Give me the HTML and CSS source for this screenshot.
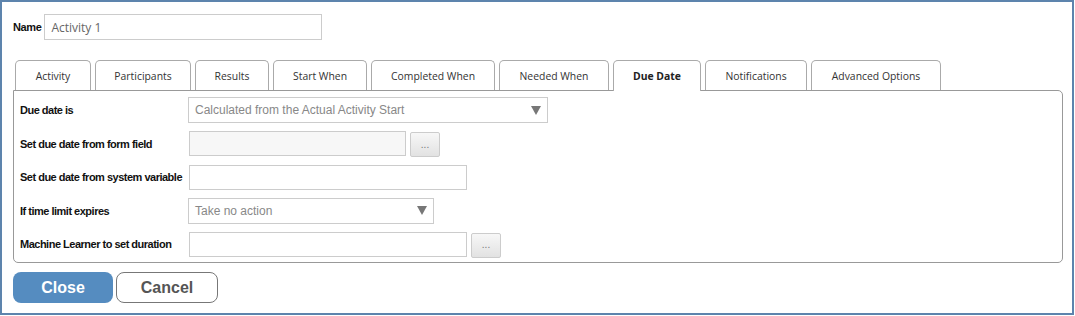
FILE: index.html
```html
<!DOCTYPE html>
<html lang="en">
<head>
    <meta charset="UTF-8">
    <title>Activity - Due Date</title>
    <link rel="stylesheet" href="styles.css">
</head>
<body>
    <div class="dialog">
        <div class="name-row">
            <label class="name-label">Name</label>
            <input class="name-input" type="text" value="Activity 1">
        </div>

        <ul class="tabs">
            <li class="tab tab-activity">Activity</li>
            <li class="tab tab-participants">Participants</li>
            <li class="tab tab-results">Results</li>
            <li class="tab tab-start">Start When</li>
            <li class="tab tab-completed">Completed When</li>
            <li class="tab tab-needed">Needed When</li>
            <li class="tab tab-due active">Due Date</li>
            <li class="tab tab-notifications">Notifications</li>
            <li class="tab tab-advanced">Advanced Options</li>
        </ul>

        <div class="panel">
            <div class="form-grid">
                <label class="field-label">Due date is</label>
                <div class="field">
                    <div class="select wide">
                        <span>Calculated from the Actual Activity Start</span>
                        <i class="caret"></i>
                    </div>
                </div>

                <label class="field-label">Set due date from form field</label>
                <div class="field">
                    <input class="text-input short" type="text" disabled>
                    <button class="dots-btn">...</button>
                </div>

                <label class="field-label">Set due date from system variable</label>
                <div class="field">
                    <input class="text-input" type="text">
                </div>

                <label class="field-label">If time limit expires</label>
                <div class="field">
                    <div class="select narrow">
                        <span>Take no action</span>
                        <i class="caret"></i>
                    </div>
                </div>

                <label class="field-label">Machine Learner to set duration</label>
                <div class="field">
                    <input class="text-input" type="text">
                    <button class="dots-btn">...</button>
                </div>
            </div>
        </div>

        <div class="actions">
            <button class="btn btn-close">Close</button>
            <button class="btn btn-cancel">Cancel</button>
        </div>
    </div>
</body>
</html>
```

FILE: styles.css
```css
* {
    margin: 0;
    padding: 0;
    box-sizing: border-box;
}

body {
    background: #fff;
    font-family: "Liberation Sans", Arial, sans-serif;
    color: #111;
}

.dialog {
    width: 1074px;
    height: 315px;
    border: 2px solid #5d84ad;
    padding: 12px 10px 0 11px;
}

.name-row {
    display: flex;
    align-items: center;
    gap: 3px;
}

.name-label {
    font-size: 11px;
    font-weight: bold;
    letter-spacing: -0.4px;
    color: #111;
}

.name-input {
    width: 278px;
    height: 26px;
    border: 1px solid #ccc;
    padding: 0 6px;
    font-family: "Open Sans", "Noto Sans", sans-serif;
    font-size: 12px;
    color: #666;
    outline: none;
}

.tabs {
    list-style: none;
    display: flex;
    gap: 4px;
    margin-top: 20px;
    padding-left: 2px;
    position: relative;
    z-index: 1;
}

.tab {
    flex: none;
    height: 30px;
    border: 1px solid #aaa;
    border-bottom: none;
    border-radius: 5px 5px 0 0;
    background: #fff;
    font-family: "Open Sans", "Noto Sans", sans-serif;
    font-size: 10.4px;
    white-space: nowrap;
    color: #333;
    display: flex;
    align-items: center;
    justify-content: center;
}

.tab-activity { width: 76px; }
.tab-participants { width: 96px; }
.tab-results { width: 74px; }
.tab-start { width: 94px; }
.tab-completed { width: 124px; }
.tab-needed { width: 110px; }
.tab-due { width: 88px; }
.tab-notifications { width: 102px; }
.tab-advanced { width: 130px; }

.tab.active {
    font-weight: bold;
    color: #222;
    height: 31px;
    margin-bottom: -1px;
}

.panel {
    width: 1050px;
    height: 173px;
    border: 1px solid #999;
    border-radius: 0 5px 5px 5px;
    padding: 6px 6px 0 6px;
}

.form-grid {
    display: grid;
    grid-template-columns: 168px 1fr;
    grid-auto-rows: 26px;
    row-gap: 7.5px;
    align-items: center;
}

.field-label {
    font-size: 11px;
    font-weight: bold;
    letter-spacing: -0.5px;
    white-space: nowrap;
    color: #111;
}

.field {
    display: flex;
    align-items: center;
    gap: 4px;
}

.select {
    height: 26px;
    border: 1px solid #ccc;
    background: #fff;
    padding: 0 6px 0 6px;
    display: flex;
    align-items: center;
    justify-content: space-between;
    font-size: 12px;
    color: #888;
}

.select.wide {
    width: 360px;
}

.select.narrow {
    width: 246px;
}

.caret {
    width: 0;
    height: 0;
    border-left: 5px solid transparent;
    border-right: 5px solid transparent;
    border-top: 9px solid #777;
}

.text-input {
    width: 278px;
    height: 25px;
    border: 1px solid #ccc;
    background: #fff;
    margin-left: 1px;
    outline: none;
}

.text-input.short {
    width: 217px;
}

.text-input:disabled {
    background: #f7f7f7;
}

.dots-btn {
    width: 30px;
    height: 25px;
    margin-top: 2px;
    border: 1px solid #ccc;
    border-radius: 2px;
    background: linear-gradient(#f7f7f7, #e2e2e2);
    color: #777;
    font-size: 10px;
    line-height: 20px;
    cursor: pointer;
}

.actions {
    display: flex;
    gap: 3px;
    margin-top: 9px;
}

.btn {
    height: 31px;
    border-radius: 8px;
    font-family: "Liberation Sans", Arial, sans-serif;
    font-size: 16px;
    font-weight: bold;
    cursor: pointer;
}

.btn-close {
    width: 100px;
    border: none;
    background: #558cc0;
    color: #fff;
}

.btn-cancel {
    width: 102px;
    border: 1px solid #777;
    background: #fff;
    color: #555;
}
```
